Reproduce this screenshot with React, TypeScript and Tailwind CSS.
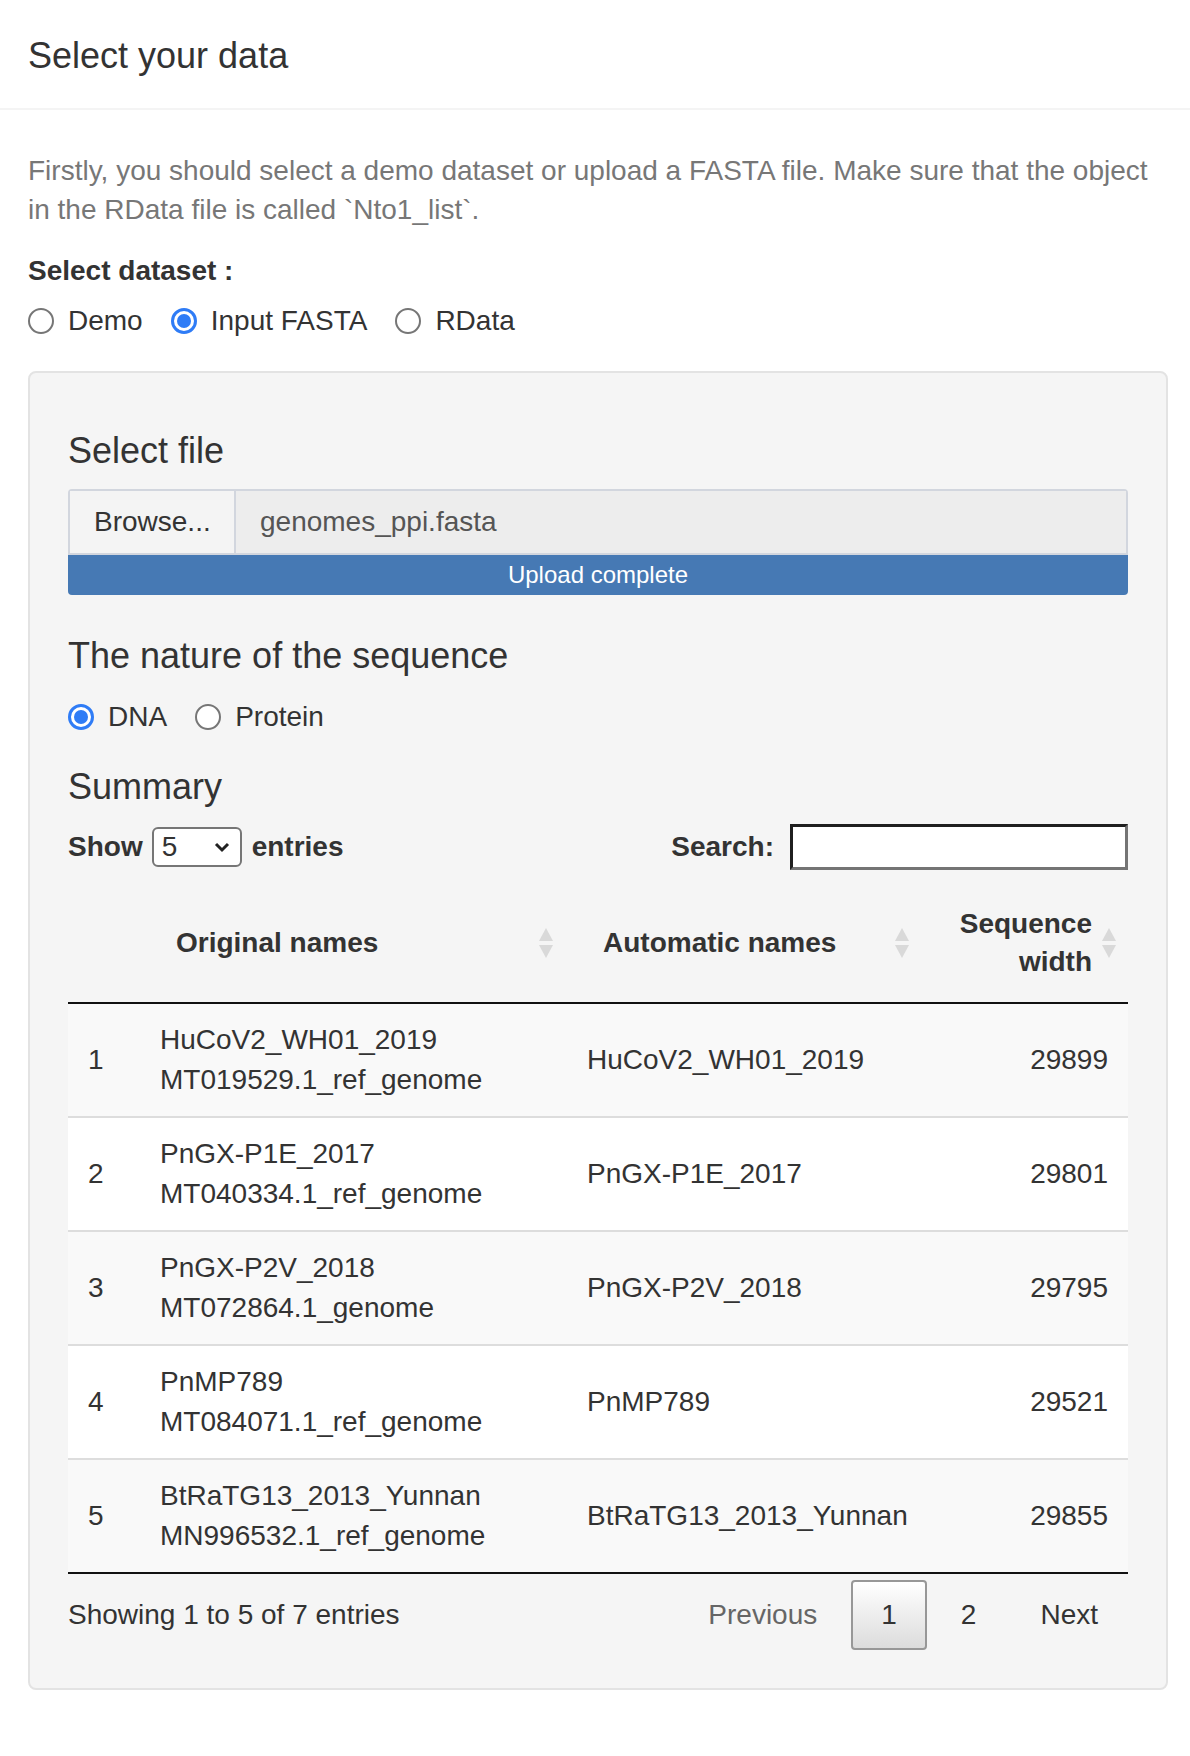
import React from "react";

const rows = [
  ["1", "HuCoV2_WH01_2019", "MT019529.1_ref_genome", "HuCoV2_WH01_2019", "29899"],
  ["2", "PnGX-P1E_2017", "MT040334.1_ref_genome", "PnGX-P1E_2017", "29801"],
  ["3", "PnGX-P2V_2018", "MT072864.1_genome", "PnGX-P2V_2018", "29795"],
  ["4", "PnMP789", "MT084071.1_ref_genome", "PnMP789", "29521"],
  ["5", "BtRaTG13_2013_Yunnan", "MN996532.1_ref_genome", "BtRaTG13_2013_Yunnan", "29855"],
];

function Radio({ checked }: { checked?: boolean }) {
  return checked ? (
    <span className="w-[26px] h-[26px] rounded-full border-[3px] border-[#2f7cf6] bg-white flex items-center justify-center shrink-0">
      <span className="w-[14px] h-[14px] rounded-full bg-[#2f7cf6]" />
    </span>
  ) : (
    <span className="w-[26px] h-[26px] rounded-full border-2 border-[#767676] bg-white shrink-0" />
  );
}

function RadioItem({ label, checked }: { label: string; checked?: boolean }) {
  return (
    <div className="flex items-center mr-[28px]">
      <Radio checked={checked} />
      <span className="ml-[14px]">{label}</span>
    </div>
  );
}

function SortIcon() {
  return (
    <svg width="14" height="30" viewBox="0 0 14 30" className="shrink-0">
      <polygon points="7,0 14,13 0,13" fill="#d9d9d9" />
      <polygon points="0,17 14,17 7,30" fill="#d9d9d9" />
    </svg>
  );
}

export default function App() {
  return (
    <div className="w-[1190px] min-h-[1756px] bg-white text-[#333] font-['Liberation_Sans',Arial,sans-serif] text-[28px] leading-[40px]">
      <div className="h-[110px] border-b-2 border-[#f4f4f4] px-[28px] pt-[3px] flex items-center">
        <h3 className="text-[36px] leading-none font-normal text-[#333]">Select your data</h3>
      </div>
      <div className="pl-[28px] pr-[22px] pt-[41px] pb-[66px]">
        <p className="text-[#777] leading-[39px] whitespace-nowrap">
          Firstly, you should select a demo dataset or upload a FASTA file. Make sure that the object
          <br />
          in the RData file is called `Nto1_list`.
        </p>
        <div className="mt-[22px] font-bold">Select dataset :</div>
        <div className="mt-[10px] flex items-center h-[40px]">
          <RadioItem label="Demo" />
          <RadioItem label="Input FASTA" checked />
          <RadioItem label="RData" />
        </div>

        <div className="mt-[30px] border-2 border-[#e3e3e3] rounded-[8px] bg-[#f5f5f5] px-[38px] pt-[58px] pb-[38px]">
          <h4 className="text-[36px] leading-[40px] font-normal">Select file</h4>
          <div className="mt-[18px] flex h-[66px] border-2 border-[#d2d6de] rounded-t-[4px]">
            <div className="w-[166px] bg-[#f4f4f4] border-r-2 border-[#d2d6de] flex items-center pl-[24px]">
              Browse...
            </div>
            <div className="flex-1 bg-[#ededed] flex items-center pl-[24px] text-[#555]">genomes_ppi.fasta</div>
          </div>
          <div className="h-[40px] bg-[#4679b4] rounded-b-[4px] text-white text-[24px] leading-[40px] text-center">
            Upload complete
          </div>

          <h4 className="mt-[41px] text-[36px] leading-[40px] font-normal">The nature of the sequence</h4>
          <div className="mt-[21px] flex items-center h-[40px]">
            <RadioItem label="DNA" checked />
            <RadioItem label="Protein" />
          </div>

          <h4 className="mt-[30px] text-[36px] leading-[40px] font-normal">Summary</h4>
          <div className="mt-[16px] h-[48px] flex items-center justify-between font-bold">
            <div className="flex items-center">
              <span>Show</span>
              <div className="ml-[9px] w-[90px] h-[40px] bg-white border-2 border-[#767676] rounded-[6px] flex items-center justify-between pl-[8px] pr-[10px] font-normal">
                <span>5</span>
                <svg width="16" height="12" viewBox="0 0 16 12">
                  <polyline points="2,3 8,9 14,3" fill="none" stroke="#222" strokeWidth="3" />
                </svg>
              </div>
              <span className="ml-[10px]">entries</span>
            </div>
            <div className="flex items-center">
              <span>Search:</span>
              <div className="ml-[16px] w-[338px] h-[46px] bg-white border-[3px] border-t-[#1f1f1f] border-l-[#1f1f1f] border-b-[#747474] border-r-[#747474]" />
            </div>
          </div>

          <table className="mt-[12px] w-full table-fixed border-collapse">
            <colgroup>
              <col className="w-[72px]" />
              <col className="w-[427px]" />
              <col className="w-[356px]" />
              <col className="w-[205px]" />
            </colgroup>
            <thead>
              <tr className="border-b-2 border-[#111]">
                <th className="h-[120px]" />
                <th className="font-bold text-left">
                  <div className="flex items-center justify-between pl-[36px] pr-[14px]">
                    <span>Original names</span>
                    <SortIcon />
                  </div>
                </th>
                <th className="font-bold text-left">
                  <div className="flex items-center justify-between pl-[36px] pr-[14px]">
                    <span>Automatic names</span>
                    <SortIcon />
                  </div>
                </th>
                <th className="font-bold">
                  <div className="flex items-center justify-end pr-[12px] leading-[38px]">
                    <span className="text-right">
                      Sequence
                      <br />
                      width
                    </span>
                    <span className="ml-[10px]">
                      <SortIcon />
                    </span>
                  </div>
                </th>
              </tr>
            </thead>
            <tbody>
              {rows.map((r, i) => (
                <tr
                  key={r[0]}
                  className={
                    (i % 2 === 0 ? "bg-[#f9f9f9] " : "bg-white ") + (i > 0 ? "border-t-2 border-[#dddddd]" : "")
                  }
                >
                  <td className="px-[20px] py-[16px] align-middle">{r[0]}</td>
                  <td className="px-[20px] py-[16px] align-middle whitespace-nowrap">
                    {r[1]}
                    <br />
                    {r[2]}
                  </td>
                  <td className="px-[20px] py-[16px] align-middle whitespace-nowrap">{r[3]}</td>
                  <td className="px-[20px] py-[16px] align-middle text-right">{r[4]}</td>
                </tr>
              ))}
            </tbody>
          </table>
          <div className="border-t-2 border-[#111]" />

          <div className="mt-[6px] flex items-center justify-between">
            <span>Showing 1 to 5 of 7 entries</span>
            <div className="flex items-center">
              <span className="ml-[4px] px-[28px] py-[13px] border-2 border-transparent text-[#666]">Previous</span>
              <span className="ml-[4px] px-[28px] py-[13px] border-2 border-[#979797] rounded-[4px] bg-linear-to-b from-white to-[#dcdcdc]">
                1
              </span>
              <span className="ml-[4px] px-[28px] py-[13px] border-2 border-transparent">2</span>
              <span className="ml-[4px] px-[28px] py-[13px] border-2 border-transparent">Next</span>
            </div>
          </div>
        </div>
      </div>
    </div>
  );
}
